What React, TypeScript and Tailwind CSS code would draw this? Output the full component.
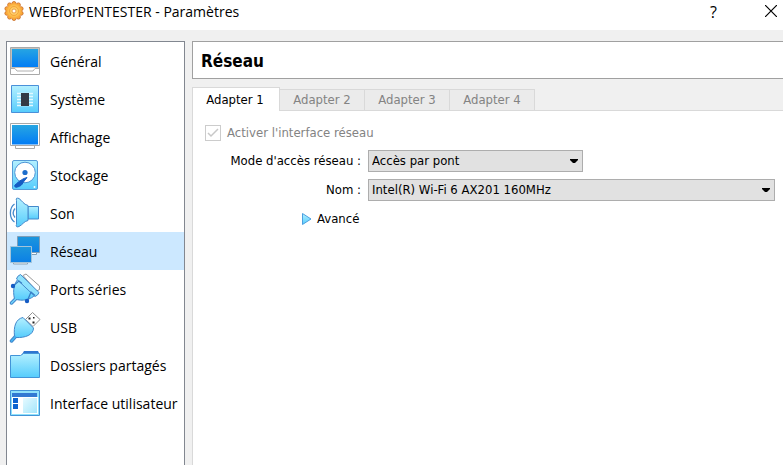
import { useState } from "react";
import type { ReactNode } from "react";

function IconDefs() {
  return (
    <svg className="absolute h-0 w-0" aria-hidden="true">
      <defs>
        <linearGradient id="screen" x1="0" y1="0" x2="0" y2="1">
          <stop offset="0" stopColor="#27a6e2" />
          <stop offset="1" stopColor="#027cf5" />
        </linearGradient>
        <linearGradient id="monitor" x1="0" y1="0" x2="0" y2="1">
          <stop offset="0" stopColor="#1d97dc" />
          <stop offset="1" stopColor="#0b7fe6" />
        </linearGradient>
        <linearGradient id="sky" x1="0" y1="0" x2="0" y2="1">
          <stop offset="0" stopColor="#b4f0ff" />
          <stop offset="1" stopColor="#55ccfc" />
        </linearGradient>
        <linearGradient id="pane" x1="0" y1="0" x2="1" y2="1">
          <stop offset="0" stopColor="#e6faff" />
          <stop offset="1" stopColor="#a4e6fb" />
        </linearGradient>
        <radialGradient id="gear">
          <stop offset="0" stopColor="#ffe08a" />
          <stop offset="0.7" stopColor="#fdc04d" />
          <stop offset="1" stopColor="#f9a336" />
        </radialGradient>
      </defs>
    </svg>
  );
}

function Icon({ children }: { children: ReactNode }) {
  return (
    <svg className="h-8 w-8 shrink-0" viewBox="0 0 32 32" fill="none" aria-hidden="true">
      {children}
    </svg>
  );
}

const GeneralIcon = () => (
  <Icon>
    <path d="M1.5 2.5h29v27h-29z" fill="#fff" stroke="#a9a9a9" />
    <path d="M2.5 3.5h27v19h-27z" fill="url(#screen)" stroke="#c4c0bb" />
    <path d="M2 23.5h4l2 2.5h16l2-2.5h4" fill="#fff" stroke="#b0b0b0" />
  </Icon>
);

const SystemIcon = () => (
  <Icon>
    <path d="M2.5 2.5h27v27h-27z" fill="url(#sky)" stroke="#4a90d9" />
    <path d="M8 10.5h16M8 13.5h16M8 16.5h16M8 19.5h16M8 22.5h16" stroke="#e2f8ff" strokeWidth="1.5" />
    <path d="M12 10h8v13h-8z" fill="#333a45" />
  </Icon>
);

const DisplayIcon = () => (
  <Icon>
    <path d="M6.5 24v3.500h19V24" fill="#fff" stroke="#a9a9a9" />
    <path d="M1.5 2.5h29v22h-29z" fill="#fff" stroke="#a9a9a9" />
    <path d="M3 4h26v19.500H3z" fill="url(#screen)" />
  </Icon>
);

const StorageIcon = () => (
  <Icon>
    <rect x="3.5" y="1.5" width="25" height="29" rx="1.5" fill="url(#sky)" stroke="#559bd8" />
    <circle cx="16" cy="13.500" r="10.300" fill="#fff" stroke="#4d94d6" />
    <circle cx="16" cy="13.500" r="2.600" fill="#1d6dcc" />
    <path d="M18 18.500c-4 1-7 3-12 7.500-1 1.500.5 3 2.500 2 3-.8 4.500-2 5.500-4.500z" fill="#155cc4" stroke="#155cc4" />
    <circle cx="25.500" cy="28" r="1" fill="#fff" />
  </Icon>
);

const SoundIcon = () => (
  <Icon>
    <path d="M19 9.5h10.500v12.500H19z" fill="url(#sky)" stroke="#4489cb" />
    <path d="M7.500 3.500C6.500 1 8 .8 10 1.500c3 2 4.500 6 9 7v15c-4.500 1-5 4-9 6-2 1-3.500 0-2.500-2z" fill="url(#sky)" stroke="#4489cb" />
    <path d="M5.500 7C0 11 0 21 5.500 25M6 11.500c-2.500 3-2.500 6 0 9" stroke="#4489cb" strokeWidth="1.300" />
  </Icon>
);

const NetworkIcon = () => (
  <Icon>
    <path d="M22 17.500h5.500v2H22" fill="#fff" stroke="#7f9eb8" />
    <path d="M8.500 1.500h22v16h-22z" fill="url(#monitor)" stroke="#7f9eb8" />
    <path d="M4.500 27.500h14v1.500h-14z" fill="#f4f6f7" stroke="#8ba3b5" />
    <path d="M1.500 11.500h21v16h-21z" fill="url(#monitor)" stroke="#a3c4da" />
  </Icon>
);

const SerialIcon = () => (
  <Icon>
    <path d="M14 2.500l3-1.500L30.500 13v3.500l-3 1.500z" fill="#fff" stroke="#999" />
    <path d="M7 25.500L2.500 30" stroke="#4388cb" strokeWidth="3.500" strokeLinecap="round" />
    <path d="M10 5C5 10 3.500 17 5.500 26 14 28.500 21 27 27 21.500z" fill="url(#sky)" stroke="#4388cb" />
    <path d="M7 25.500L2.500 30" stroke="#6fd3fb" strokeWidth="1.500" strokeLinecap="round" />
    <path d="M11.500 1.500Q8 3 7.500 6L26 23.500q3-1 4-4z" fill="#8fe2fd" stroke="#4388cb" strokeLinejoin="round" />
    <path d="M4 13l6-5 3 2.500M18.500 27.500L22 19l4 3.500" stroke="#397fc8" strokeWidth="1.300" />
    <circle cx="4" cy="13" r="2.200" fill="#155cc4" />
    <circle cx="18" cy="28" r="2.200" fill="#155cc4" />
  </Icon>
);

const UsbIcon = () => (
  <Icon>
    <path d="M16.500 8.500l7-7 7.500 7-7 7z" fill="#fff" stroke="#919191" />
    <path d="M19.500 6.500h2v2h-2zM23.500 10.500h2v2h-2zM24 6h1.500v1.500H24z" fill="#222" />
    <path d="M6.500 25.500l-4 4.500" stroke="#4388cb" strokeWidth="3.500" strokeLinecap="round" />
    <path d="M14 6.500C6.500 8 4.500 16 5.500 25l1.500 1.500c9 .5 17.500-2.500 17.500-9.500z" fill="url(#sky)" stroke="#4388cb" />
    <path d="M6.500 25.500l-4 4.500" stroke="#45b5f5" strokeWidth="1.500" strokeLinecap="round" />
  </Icon>
);

const FolderIcon = () => (
  <Icon>
    <path d="M12 7l3-5h14l1 2v4H12z" fill="#2e75cf" />
    <path d="M1.5 6.5h10l3-2h16v24h-29z" fill="url(#sky)" stroke="#4294d8" />
  </Icon>
);

const InterfaceIcon = () => (
  <Icon>
    <path d="M1.5 3.5h29v25h-29z" fill="#8fe1fb" stroke="#4294d8" />
    <path d="M3 10h26v17H3z" fill="#fff" />
    <path d="M3 6h25v4H3z" fill="#3179d2" />
    <path d="M4 11h5v5H4zM4 17h5v5H4z" fill="#0c63d0" />
    <path d="M14 11h14v15H14z" fill="url(#pane)" />
  </Icon>
);

const gearTeeth = [
  [10, 2.5], [14.4, 3.9], [17.1, 7.7], [17.1, 12.3], [14.4, 16.1],
  [10, 17.5], [5.6, 16.1], [2.9, 12.3], [2.9, 7.7], [5.6, 3.9],
];

const GearIcon = () => (
  <svg className="mt-px h-5 w-5" viewBox="0 0 20 20" aria-hidden="true">
    {gearTeeth.map(([cx, cy]) => (
      <circle key={`${cx}-${cy}`} cx={cx} cy={cy} r="2" fill="#f9ab3c" stroke="#c8661f" strokeWidth="0.8" />
    ))}
    <circle cx="10" cy="10" r="7.800" fill="url(#gear)" />
    <circle cx="10" cy="10" r="4.500" fill="none" stroke="#f39a35" strokeWidth="0.8" />
    <circle cx="10" cy="10" r="2" fill="#fff" stroke="#e58a2c" strokeWidth="0.8" />
  </svg>
);

const sections = [
  { label: "Général", icon: GeneralIcon },
  { label: "Système", icon: SystemIcon },
  { label: "Affichage", icon: DisplayIcon },
  { label: "Stockage", icon: StorageIcon },
  { label: "Son", icon: SoundIcon },
  { label: "Réseau", icon: NetworkIcon },
  { label: "Ports séries", icon: SerialIcon },
  { label: "USB", icon: UsbIcon },
  { label: "Dossiers partagés", icon: FolderIcon },
  { label: "Interface utilisateur", icon: InterfaceIcon },
];

const adapters = ["Adapter 1", "Adapter 2", "Adapter 3", "Adapter 4"];

function ComboBox({ id, value, className }: { id: string; value: string; className: string }) {
  return (
    <div className={`relative ${className}`}>
      <select
        id={id}
        className="block h-[22px] w-full appearance-none border border-[#adadad] bg-[#e1e1e1] pr-5 pl-[3px] text-black"
      >
        <option>{value}</option>
      </select>
      <svg className="pointer-events-none absolute top-[9px] right-[5px] h-1 w-2" viewBox="0 0 8 4" aria-hidden="true">
        <path d="M0 0h8v1L5 4H3L0 1z" fill="#000" />
      </svg>
    </div>
  );
}

export default function App() {
  const [section, setSection] = useState("Réseau");

  return (
    <div className="flex min-h-screen flex-col bg-[#f0f0f0] font-['DejaVu_Sans_Condensed','DejaVu_Sans',sans-serif] text-black">
      <IconDefs />
      <header className="flex h-[30px] items-start bg-white pr-[6px] pl-1">
        <GearIcon />
        <h1 className="ml-[5px] flex-1 font-['Open_Sans',sans-serif] text-sm leading-6">WEBforPENTESTER - Paramètres</h1>
        <button type="button" aria-label="Aide" className="mr-12 font-['Open_Sans',sans-serif] text-base leading-6">
          ?
        </button>
        <button type="button" aria-label="Fermer" className="mt-[5px]">
          <svg className="h-3 w-3" viewBox="0 0 12 12" aria-hidden="true">
            <path d="M0 0l12 12M12 0L0 12" stroke="#000" strokeWidth="1.200" />
          </svg>
        </button>
      </header>

      <div className="flex flex-1 pt-[11px] pl-[6px]">
        <nav className="w-[179px] shrink-0 border-x border-t border-[#828790] bg-white font-['Open_Sans',sans-serif] text-sm">
          <ul>
            {sections.map(({ label, icon: SectionIcon }) => (
              <li key={label}>
                <button
                  type="button"
                  onClick={() => setSection(label)}
                  className={`flex h-[38px] w-full items-center gap-[9px] pl-[2px] text-left whitespace-nowrap ${section === label ? "bg-[#cce8ff]" : ""}`}
                >
                  <SectionIcon />
                  <span className="pt-[2px]">{label}</span>
                </button>
              </li>
            ))}
          </ul>
        </nav>

        <main className="ml-[7px] flex min-w-0 flex-1 flex-col">
          <h2 className="h-[38px] border-y border-l border-[#a0a0a0] bg-white pt-px pl-2 text-[17px] leading-9 font-bold">
            {section}
          </h2>

          <div role="tablist" className="mt-2 flex h-6 items-end text-[13px]">
            {adapters.map((adapter, i) => (
              <button
                key={adapter}
                type="button"
                role="tab"
                aria-selected={i === 0}
                className={
                  i === 0
                    ? "h-6 w-[88px] border-x border-t border-[#d9d9d9] bg-white pr-[2px]"
                    : "h-[22px] w-[85px] border-y border-r border-[#d9d9d9] bg-[#ebebeb] text-[#838383]"
                }
              >
                {adapter}
              </button>
            ))}
            <div className="flex-1 self-stretch border-b border-[#d9d9d9]" />
          </div>

          <form className="flex-1 border-l border-[#d9d9d9] bg-white pt-[14px] pr-2 pl-3 text-[13px]">
            <label className="flex h-4 items-center gap-[6px] text-[#838383]">
              <span className="relative h-4 w-4">
                <input
                  type="checkbox"
                  defaultChecked
                  disabled
                  className="block h-4 w-4 appearance-none border border-[#cccccc] bg-white"
                />
                <svg className="pointer-events-none absolute inset-0 h-4 w-4" viewBox="0 0 16 16" aria-hidden="true">
                  <path d="M3 8l3 3 7-7" fill="none" stroke="#c8c8c8" strokeWidth="1.500" />
                </svg>
              </span>
              Activer l'interface réseau
            </label>

            <div className="mt-[9px] grid grid-cols-[156px_minmax(0,1fr)] items-center gap-[7px]">
              <label htmlFor="mode" className="text-right whitespace-nowrap">
                Mode d'accès réseau :
              </label>
              <ComboBox id="mode" value="Accès par pont" className="w-[215px]" />
              <label htmlFor="name" className="text-right">
                Nom :
              </label>
              <ComboBox id="name" value="Intel(R) Wi-Fi 6 AX201 160MHz" className="w-full" />
            </div>

            <button type="button" className="mt-2 ml-[96px] flex items-center gap-[5px]">
              <svg className="h-[14px] w-[11px]" viewBox="0 0 11 14" aria-hidden="true">
                <path d="M1.500 1.500l8.500 5.500-8.500 5.500z" fill="url(#sky)" stroke="#4c9fe0" />
              </svg>
              Avancé
            </button>
          </form>
        </main>
      </div>
    </div>
  );
}
